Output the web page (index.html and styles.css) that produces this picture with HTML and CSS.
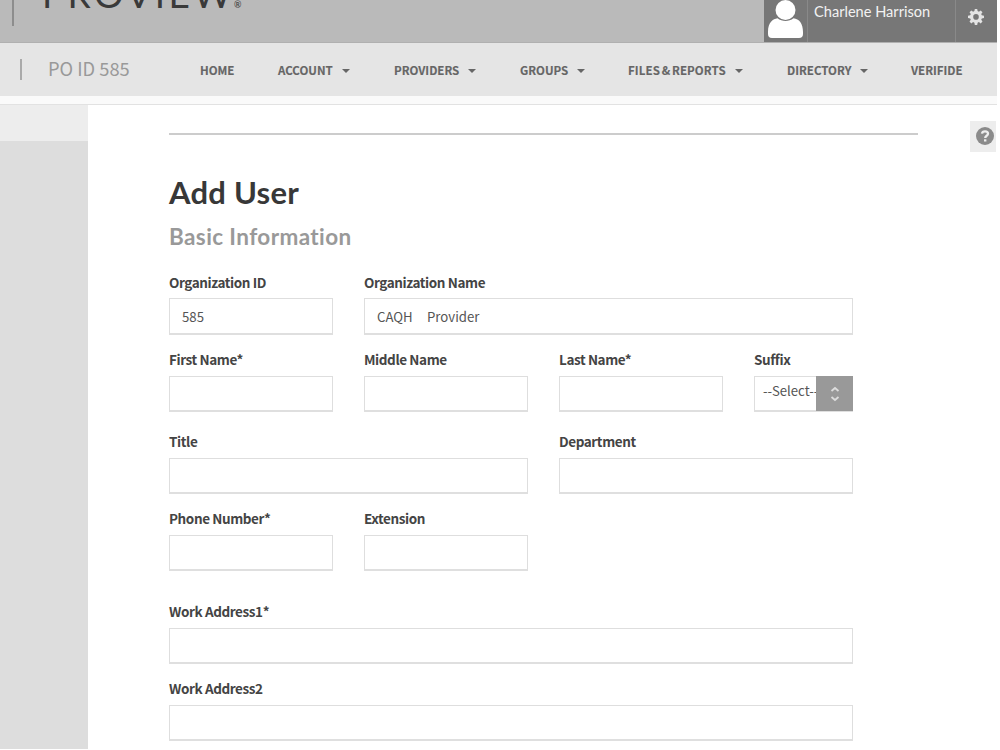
FILE: index.html
```html
<!DOCTYPE html>
<html lang="en">
<head>
<meta charset="utf-8">
<title>Add User</title>
<link rel="stylesheet" href="styles.css">
</head>
<body>
<div class="app">
  <header class="topbar">
    <div class="brand"><span class="brand-name">PROVIEW</span><span class="reg">®</span></div>
    <div class="account">
      <div class="avatar">
        <svg width="36" height="39" viewBox="0 0 36 39"><circle cx="17.5" cy="10" r="10"/><path d="M0 32C0 22 5 19 9.500 18.200C14 21.800 21 21.800 25.500 18.200C31 19 35 23 35 32V34Q35 38 31 38H4Q0 38 0 34Z"/></svg>
      </div>
      <div class="user">Charlene Harrison</div>
      <div class="gear">
        <svg width="16" height="16" viewBox="0 0 16 16"><path fill-rule="evenodd" d="M6.800 0h2.400l.4 2.100 1.300.6 1.800-1.300 1.800 1.800-1.300 1.800.6 1.300 2.200.4v2.400l-2.200.4-.6 1.300 1.300 1.800-1.800 1.800-1.800-1.300-1.300.6-.4 2.300H6.800l-.4-2.300-1.300-.6-1.800 1.300-1.800-1.800 1.300-1.800-.6-1.300L0 9.100V6.700l2.200-.4.6-1.300-1.300-1.800 1.800-1.800 1.800 1.300 1.300-.6zM8 5.100a2.800 2.800 0 1 0 0 5.600a2.800 2.800 0 1 0 0-5.600z"/></svg>
      </div>
    </div>
  </header>
  <nav class="nav">
    <div class="org">PO ID 585</div>
    <div class="item home">HOME</div>
    <div class="item acct">ACCOUNT<i class="caret"></i></div>
    <div class="item prov">PROVIDERS<i class="caret"></i></div>
    <div class="item grps">GROUPS<i class="caret"></i></div>
    <div class="item files">FILES &amp; REPORTS<i class="caret"></i></div>
    <div class="item dir">DIRECTORY<i class="caret"></i></div>
    <div class="item veri">VERIFIDE</div>
  </nav>
  <div class="strip"></div>
  <div class="main">
    <aside class="side"><div class="side-top"></div></aside>
    <main class="content">
      <hr class="rule">
      <h1 class="title">Add User</h1>
      <h2 class="subtitle">Basic Information</h2>
      <form class="form">
        <div class="row">
          <div class="field"><label class="label">Organization ID</label><div class="input">585</div></div>
          <div class="field span3"><label class="label">Organization Name</label><div class="input"><span class="word">CAQH</span><span>Provider</span></div></div>
        </div>
        <div class="row names">
          <div class="field"><label class="label">First Name*</label><div class="input"></div></div>
          <div class="field"><label class="label">Middle Name</label><div class="input"></div></div>
          <div class="field"><label class="label">Last Name*</label><div class="input"></div></div>
          <div class="field"><label class="label">Suffix</label><div class="input select"><span class="choice">--Select--</span><span class="stepper"><svg width="10" height="18" viewBox="0 0 10 18"><path d="M1.500 6L5 3L8.500 6M1.500 12L5 15L8.500 12"/></svg></span></div></div>
        </div>
        <div class="row job">
          <div class="field span2"><label class="label">Title</label><div class="input"></div></div>
          <div class="field span2"><label class="label">Department</label><div class="input"></div></div>
        </div>
        <div class="row phone">
          <div class="field"><label class="label">Phone Number*</label><div class="input"></div></div>
          <div class="field"><label class="label">Extension</label><div class="input"></div></div>
        </div>
        <div class="row address">
          <div class="field span4"><label class="label">Work Address1*</label><div class="input"></div></div>
        </div>
        <div class="row address2">
          <div class="field span4"><label class="label">Work Address2</label><div class="input"></div></div>
        </div>
      </form>
    </main>
    <div class="help"><svg width="18" height="18" viewBox="0 0 18 18"><circle cx="9" cy="9" r="9"/><path d="M6 6.700C6.300 3.500 12 3.600 12 6.800C12 8.800 9.200 8.800 9.200 11"/><rect x="8" y="12.300" width="2.400" height="2.200"/></svg></div>
  </div>
</div>
</body>
</html>
```

FILE: styles.css
```css
* { box-sizing: border-box; }
body { margin: 0; background: #fff; overflow: hidden; font-family: "Noto Sans CJK SC", "Noto Sans", sans-serif; }
.app { width: 997px; height: 749px; overflow: hidden; display: flex; flex-direction: column; background: #fff; }
.topbar { height: 43px; flex: none; background: #bababa; border-bottom: 1px solid #b0b0b0; display: flex; justify-content: space-between; overflow: hidden; }
.brand { margin-left: 12px; height: 26px; border-left: 2px solid #8d8d8d; padding-left: 28px; display: flex; color: #3a3a3a; font-family: Lato, sans-serif; font-weight: 400; font-size: 37px; line-height: 44px; letter-spacing: 3.400px; }
.brand-name { margin-top: -28px; }
.reg { margin: -17px 0 0 -1px; font-size: 9px; font-weight: 700; letter-spacing: 0; color: #555; }
.account { width: 233px; height: 42px; background: #777; display: flex; }
.avatar { width: 44px; padding-left: 4px; border-right: 1px solid #898989; }
.avatar svg { display: block; fill: #fff; }
.user { width: 147px; padding-left: 6px; color: #f2f2f2; font: 400 14.600px/24px Lato, sans-serif; white-space: nowrap; }
.gear { flex: 1; border-left: 1px solid #898989; padding: 9px 0 0 12px; }
.gear svg { display: block; fill: #e4e4e4; }
.nav { height: 53px; flex: none; background: #e5e5e5; display: flex; align-items: center; color: #666; white-space: nowrap; }
.org { margin-left: 20px; width: 180px; height: 21px; border-left: 2px solid #aaa; padding-left: 26px; font-size: 18.300px; line-height: 18px; font-weight: 400; color: #999; }
.item { font-size: 11.500px; line-height: 16px; font-weight: 700; display: flex; align-items: center; -webkit-text-stroke: .15px; }
.home { width: 78px; }
.acct { width: 116px; }
.prov { width: 126px; }
.grps { width: 108px; }
.files { width: 159px; letter-spacing: .1px; word-spacing: -1px; }
.dir { width: 124px; }
.caret { margin: 3px 0 0 9px; border: 4px solid transparent; border-top-color: #666; border-bottom: 0; }
.strip { height: 9px; flex: none; background: #fafafa; border-bottom: 1px solid #e2e2e2; }
.main { flex: 1; display: flex; min-height: 0; }
.side { width: 88px; flex: none; background: #ddd; }
.side-top { height: 36px; background: #ededed; }
.content { margin-left: 81px; width: 749px; flex: none; padding-top: 28px; }
.rule { margin: 0; height: 2px; border: 0; background: #ccc; }
.title { margin: 37px 0 0; font: 700 31px/40px Lato, sans-serif; letter-spacing: .25px; color: #383838; }
.subtitle { margin: 11px 0 0; font: 700 22.500px/28px Lato, sans-serif; letter-spacing: .4px; color: #999; }
.form { margin-top: 16px; width: 684px; }
.row { display: grid; grid-template-columns: 164px 164px 164px 99px; column-gap: 31px; }
.names { margin-top: 10px; }
.job { margin-top: 14px; }
.phone, .address2 { margin-top: 9px; }
.address { margin-top: 25px; }
.span2 { grid-column: span 2; }
.span3 { grid-column: span 3; }
.span4 { grid-column: span 4; }
.label { display: block; height: 31px; padding-top: 5px; font-size: 13.500px; line-height: 20px; font-weight: 700; letter-spacing: -.4px; color: #444; white-space: nowrap; }
.names .label, .job .label, .phone .label, .address .label, .address2 .label { padding-top: 4px; }
.input { height: 37px; border: 1px solid #dedede; border-bottom: 2px solid #dfdfdf; padding-left: 12px; font-size: 13.200px; line-height: 35px; color: #555; background: #fff; display: flex; white-space: nowrap; }
.names .input, .job .input, .phone .input, .address .input, .address2 .input { height: 36px; margin-bottom: 1px; }
.word { width: 50px; }
.select { padding-left: 8px; }
.choice { width: 53px; line-height: 28px; }
.stepper { width: 37px; flex: none; margin: -1px -1px -1px 0; background: #999; display: flex; align-items: center; justify-content: center; position: relative; }
.stepper svg { fill: none; stroke: #ddd; stroke-width: 1.800; }
.help { width: 26px; height: 31px; margin: 16px 0 0 52px; background: #ededed; padding: 6px 0 0 6px; flex: none; }
.help svg { display: block; fill: #8b8b8b; }
.help path { fill: none; stroke: #eee; stroke-width: 2.300; }
.help rect { fill: #eee; }
```
